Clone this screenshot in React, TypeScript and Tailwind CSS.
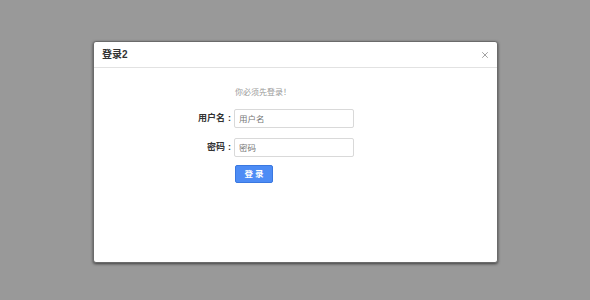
import { X } from "lucide-react";

export default function App() {
  return (
    <div
      className="w-[590px] h-[300px] bg-[#999999] pt-[41px] flex justify-center"
      style={{ fontFamily: '"Liberation Sans", "Noto Sans CJK SC", sans-serif' }}
    >
      <div className="w-[405px] h-[222px] ml-[1px] bg-white rounded-[3px] shadow-[0_1px_3px_rgba(0,0,0,0.6)] border border-[#6b6b6b]">
        {/* Header */}
        <div className="h-[26px] border-b border-[#e2e2e2] flex items-center justify-between pl-[8px] pr-[7px]">
          <span className="text-[10px] font-bold text-[#333]">登录2</span>
          <X className="w-[10px] h-[10px] text-[#8f8f8f]" strokeWidth={2} />
        </div>

        {/* Body */}
        <div className="pt-[19px]">
          <p className="pl-[141px] text-[8px] leading-[11px] text-[#999]">你必须先登录！</p>

          <div className="mt-[11px] flex items-center">
            <label className="w-[140px] flex justify-end items-center text-[9px] font-bold text-[#333]">
              用户名<span className="ml-[3px] mr-[3px]">:</span>
            </label>
            <input
              placeholder="用户名"
              className="w-[120px] h-[19px] border border-[#d9d9d9] rounded-[2px] px-[4px] text-[8.5px] placeholder:text-[#777] outline-none"
            />
          </div>

          <div className="mt-[10px] flex items-center">
            <label className="w-[140px] flex justify-end items-center text-[9px] font-bold text-[#333]">
              密码<span className="ml-[3px] mr-[3px]">:</span>
            </label>
            <input
              placeholder="密码"
              className="w-[120px] h-[19px] border border-[#d9d9d9] rounded-[2px] px-[4px] text-[8.5px] placeholder:text-[#777] outline-none"
            />
          </div>

          <div className="mt-[8px] pl-[141px] flex">
            <button className="w-[38px] h-[18px] flex items-center justify-center bg-[#4d8cf5] border border-[#3a78e0] rounded-[2px] text-white text-[8.5px] font-bold tracking-[2px] pl-[2px]">
              登录
            </button>
          </div>
        </div>
      </div>
    </div>
  );
}
